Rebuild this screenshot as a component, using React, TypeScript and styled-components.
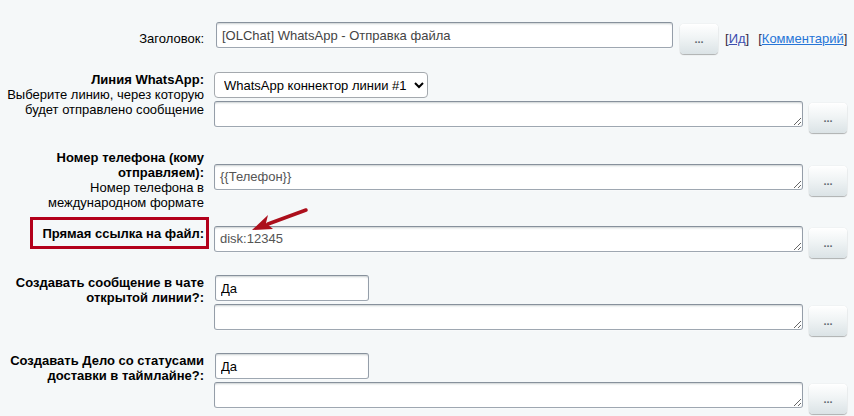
import React from "react";
import styled, { createGlobalStyle } from "styled-components";

const GlobalStyle = createGlobalStyle`
  html, body {
    margin: 0;
    padding: 0;
    background: #f5f8f9;
  }
  body {
    font-family: "Liberation Sans", Arial, sans-serif;
    font-size: 13px;
    color: #000;
  }
`;

const Page = styled.div`
  width: 854px;
  height: 416px;
  overflow: hidden;
  box-sizing: border-box;
  padding: 22px 0 0 4px;
  display: flex;
  flex-direction: column;
`;

const Row = styled.div<{ $after?: number }>`
  display: grid;
  grid-template-columns: 200px 1fr;
  column-gap: 10px;
  align-items: center;
  margin-bottom: ${(p) => p.$after ?? 17}px;
`;

const Label = styled.div<{ $middle?: boolean }>`
  position: relative;
  align-self: ${(p) => (p.$middle ? "center" : "start")};
  text-align: right;
  font-size: 13px;
  line-height: 15px;
  color: #000;
  b {
    font-weight: bold;
  }
`;

const Highlight = styled.span`
  position: absolute;
  left: 26px;
  right: -5px;
  top: -9px;
  height: 32px;
  box-sizing: border-box;
  border: 3px solid #b3001b;
  pointer-events: none;
`;

const Cell = styled.div`
  position: relative;
  display: flex;
  flex-direction: column;
  gap: 3px;
`;

const Line = styled.div`
  display: flex;
  align-items: flex-start;
  gap: 6px;
`;

const fieldBase = `
  box-sizing: border-box;
  height: 26px;
  border: 1px solid;
  border-color: #87919c #959ea9 #9ea7b1 #959ea9;
  border-radius: 3px;
  background: #fff;
  box-shadow: 0 1px 0 0 rgba(255,255,255,0.3), inset 0 2px 2px -1px rgba(180,188,191,0.7);
  font-family: "Liberation Sans", Arial, sans-serif;
  font-size: 13px;
  outline: none;
`;

const TextInput = styled.input<{ $width: number; $shift?: number; $dark?: boolean }>`
  ${fieldBase}
  width: ${(p) => p.$width}px;
  margin-left: ${(p) => p.$shift ?? 0}px;
  padding: 0 5px;
  color: ${(p) => (p.$dark ? "#000" : "#444")};
`;

const TextArea = styled.textarea`
  ${fieldBase}
  display: block;
  width: 589px;
  padding: 4px 5px 0;
  line-height: 16px;
  color: #555;
  resize: both;
  overflow: hidden;
`;

const Select = styled.select`
  box-sizing: border-box;
  width: 214px;
  height: 26px;
  font-family: "Liberation Sans", Arial, sans-serif;
  font-size: 13px;
  color: #000;
  background: #fff;
  border: 1px solid #a4a9ae;
  border-radius: 4px;
  padding: 0 2px 0 5px;
`;

const DotsButton = styled.button`
  box-sizing: border-box;
  width: 38px;
  height: 30px;
  margin-top: 2px;
  border: none;
  border-radius: 4px;
  background: linear-gradient(to bottom, #ffffff 0%, #f0f4f5 45%, #dbe3e6 100%);
  box-shadow: 0 0 1px rgba(0, 0, 0, 0.2), 0 1px 1px rgba(0, 0, 0, 0.28),
    inset 0 1px #fff;
  color: #5d686e;
  font-family: "Liberation Sans", Arial, sans-serif;
  font-size: 11px;
  font-weight: bold;
  line-height: 30px;
  padding: 0;
  cursor: pointer;
`;

const Links = styled.div`
  display: flex;
  gap: 9px;
  align-self: center;
  margin-top: 1px;
  font-size: 13px;
  line-height: 15px;
`;

const Bracket = styled.span`
  color: #3a2b3d;
`;

const Link = styled.a<{ $visited?: boolean }>`
  color: ${(p) => (p.$visited ? "#3c4fb0" : "#2675d7")};
  text-decoration: underline;
`;

const TitleLine = styled.div`
  display: flex;
  align-items: flex-start;
  gap: 7px;
`;

const ArrowSvg = styled.svg`
  position: absolute;
  left: 30px;
  top: -20px;
  pointer-events: none;
`;

const Arrow = () => (
  <ArrowSvg width="70" height="32" viewBox="0 0 70 32">
    <line x1="62" y1="4" x2="24" y2="18" stroke="#ac0f1c" strokeWidth="3.5" strokeLinecap="round" />
    <polygon points="8,24 24,9 22,17 29,23" fill="#ac0f1c" />
  </ArrowSvg>
);

const Field: React.FC<{ value?: string }> = ({ value }) => (
  <Line>
    <TextArea defaultValue={value ?? ""} />
    <DotsButton type="button">...</DotsButton>
  </Line>
);

export default function App() {
  return (
    <>
      <GlobalStyle />
      <Page>
        <Row $after={18}>
          <Label $middle>Заголовок:</Label>
          <TitleLine>
            <TextInput $width={457} $shift={2} defaultValue="[OLChat] WhatsApp - Отправка файла" />
            <DotsButton type="button">...</DotsButton>
            <Links>
              <span>
                <Bracket>[</Bracket>
                <Link href="#" $visited>Ид</Link>
                <Bracket>]</Bracket>
              </span>
              <span>
                <Bracket>[</Bracket>
                <Link href="#">Комментарий</Link>
                <Bracket>]</Bracket>
              </span>
            </Links>
          </TitleLine>
        </Row>

        <Row $after={17}>
          <Label>
            <b>Линия WhatsApp:</b>
            <br />
            Выберите линию, через которую будет отправлено сообщение
          </Label>
          <Cell>
            <div>
              <Select defaultValue="1">
                <option value="1">WhatsApp коннектор линии #1</option>
              </Select>
            </div>
            <Field />
          </Cell>
        </Row>

        <Row $after={16}>
          <Label>
            <b>Номер телефона (кому отправляем):</b>
            <br />
            Номер телефона в международном формате
          </Label>
          <Cell>
            <Field value="{{Телефон}}" />
          </Cell>
        </Row>

        <Row $after={17}>
          <Label>
            <b>Прямая ссылка на файл:</b>
            <Highlight />
          </Label>
          <Cell>
            <Field value="disk:12345" />
            <Arrow />
          </Cell>
        </Row>

        <Row $after={17}>
          <Label>
            <b>Создавать сообщение в чате открытой линии?:</b>
          </Label>
          <Cell>
            <div>
              <TextInput $width={154} $shift={1} $dark defaultValue="Да" />
            </div>
            <Field />
          </Cell>
        </Row>

        <Row $after={0}>
          <Label>
            <b>Создавать Дело со статусами доставки в таймлайне?:</b>
          </Label>
          <Cell>
            <div>
              <TextInput $width={154} $shift={1} $dark defaultValue="Да" />
            </div>
            <Field />
          </Cell>
        </Row>
      </Page>
    </>
  );
}
